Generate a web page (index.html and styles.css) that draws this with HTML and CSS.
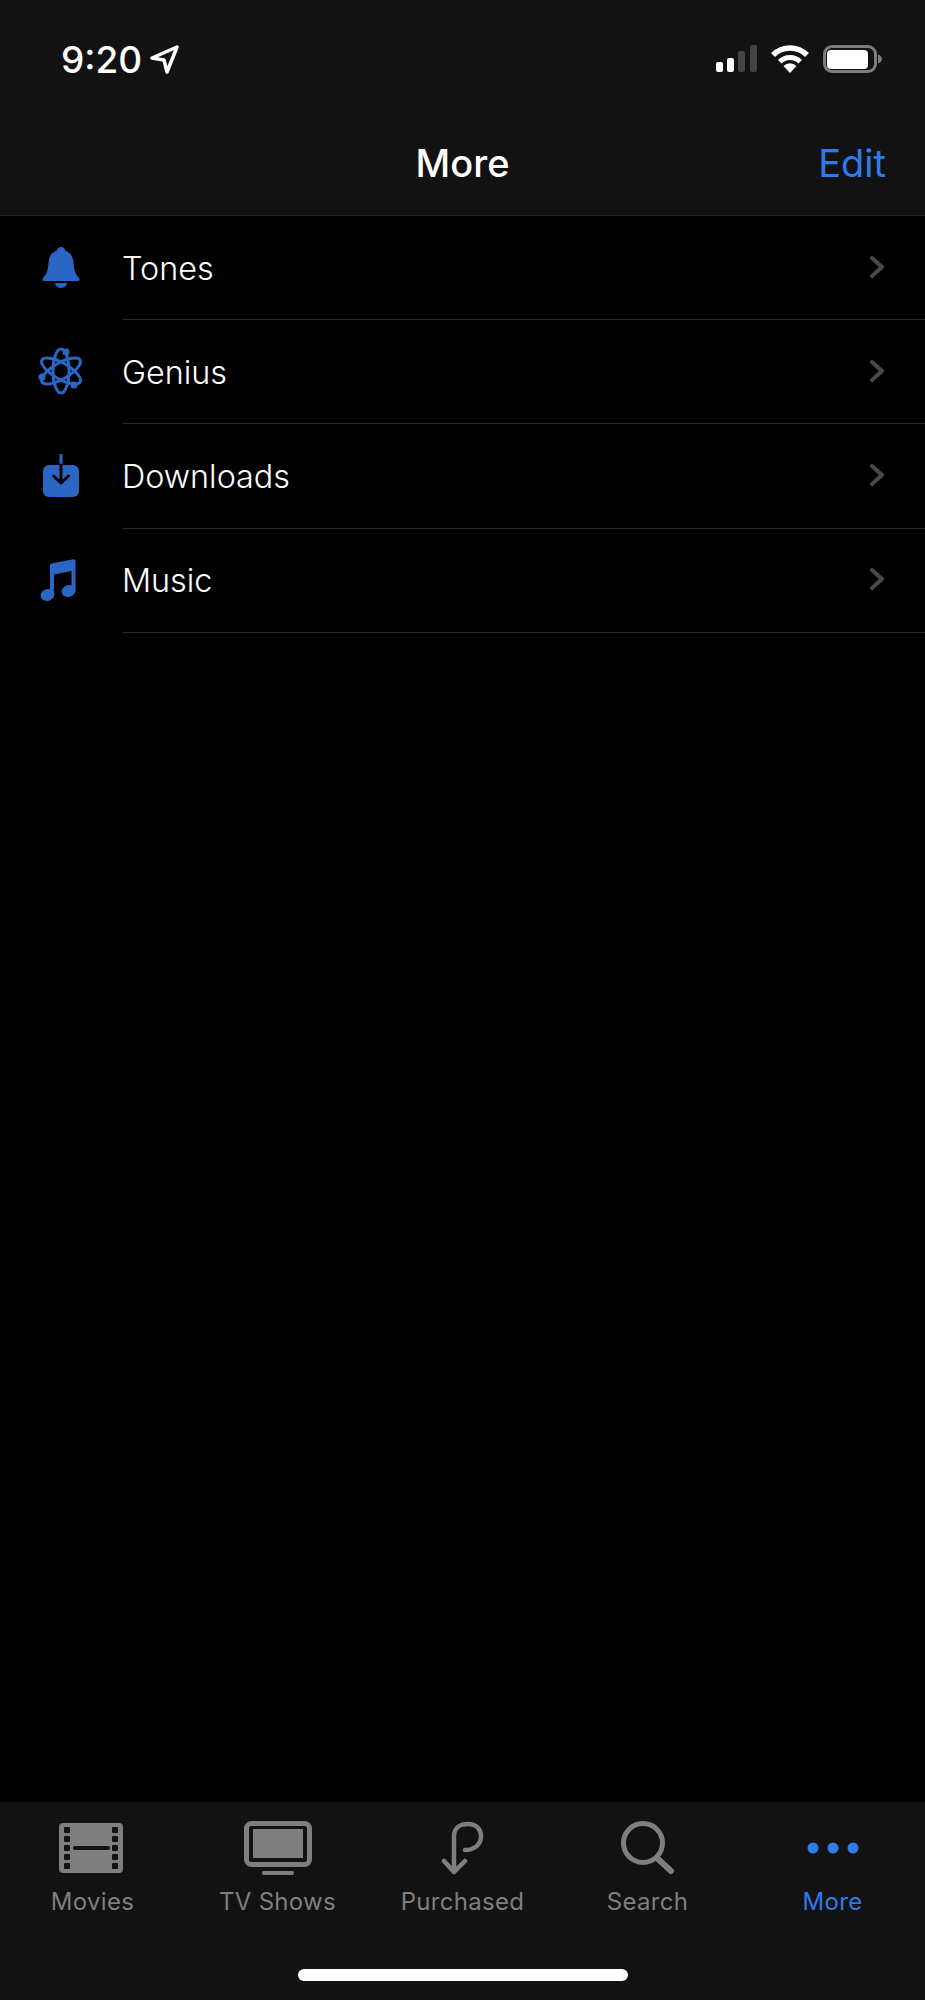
FILE: index.html
```html
<!DOCTYPE html>
<html lang="en">

<head>
    <title>More</title>
    <link rel="stylesheet" href="styles.css">
</head>

<body>

    <div id="container">

        <div class="top-bar">
            <div class="status-bar">
                <div class="status-left">
                    <span class="time">9:20</span>
                    <svg width="29" height="29" viewBox="0 0 29 29"><path d="M27 2 L2 13 L14 15 L17 27 Z" fill="none" stroke="#fff" stroke-width="3.5" stroke-linejoin="round"/></svg>
                </div>
                <div class="status-right">
                    <svg width="41" height="28" viewBox="0 0 41 28">
                        <rect x="0" y="17" width="7" height="10" rx="2" fill="#fff"/>
                        <rect x="11" y="13" width="7" height="14" rx="2" fill="#fff"/>
                        <rect x="22" y="6" width="7" height="21" rx="2" fill="#444"/>
                        <rect x="34" y="0" width="7" height="27" rx="2" fill="#444"/>
                    </svg>
                    <svg width="38" height="28" viewBox="0 0 38 28">
                        <path d="M2 10 A24 24 0 0 1 36 10" fill="none" stroke="#fff" stroke-width="5.5"/>
                        <path d="M8.75 16.75 A14.5 14.5 0 0 1 29.25 16.75" fill="none" stroke="#fff" stroke-width="5"/>
                        <path d="M19 28 L12.5 21 A9 9 0 0 1 25.5 21 Z" fill="#fff"/>
                    </svg>
                    <svg width="59" height="28" viewBox="0 0 59 28">
                        <rect x="1.5" y="1.5" width="51" height="25" rx="7.5" fill="none" stroke="#7c7c7c" stroke-width="3"/>
                        <rect x="4" y="5" width="41" height="19" rx="4" fill="#fff"/>
                        <path d="M55 9.5 C57.5 10.5 59 12 59 14 C59 16 57.5 17.5 55 18.5 Z" fill="#7c7c7c"/>
                    </svg>
                </div>
            </div>
            <div class="nav-bar">
                <span></span>
                <h2 class="nav-title">More</h2>
                <a class="nav-edit">Edit</a>
            </div>
        </div>

        <div class="list">
            <div class="row">
                <div class="row-icon">
                    <svg width="38" height="41" viewBox="0 0 38 41">
                        <path d="M19 0 C16.5 0 15 1.8 15 3.6 C9 5.5 7 10 6.5 16 C6 24 4 28 1 31 C0 32 0 34 2 34 L36 34 C38 34 38 32 37 31 C34 28 32 24 31.5 16 C31 10 29 5.5 23 3.6 C23 1.8 21.5 0 19 0 Z" fill="#2a66c4"/>
                        <path d="M13 36 L25 36 A6 5 0 0 1 13 36 Z" fill="#2a66c4"/>
                    </svg>
                </div>
                <div class="row-body">
                    <span class="row-label">Tones</span>
                    <svg class="chevron" width="16" height="24" viewBox="0 0 16 24"><path d="M3 3 L13 12 L3 21" fill="none" stroke="#4a4a4a" stroke-width="4" stroke-linecap="round" stroke-linejoin="round"/></svg>
                </div>
            </div>
            <div class="row">
                <div class="row-icon">
                    <svg width="46" height="48" viewBox="0 0 46 48">
                        <g fill="none" stroke="#2a66c4" stroke-width="3">
                            <ellipse cx="23" cy="24" rx="8" ry="22"/>
                            <ellipse cx="23" cy="24" rx="8" ry="22" transform="rotate(60 23 24)"/>
                            <ellipse cx="23" cy="24" rx="8" ry="22" transform="rotate(120 23 24)"/>
                        </g>
                        <circle cx="28" cy="5" r="3.5" fill="#2a66c4"/>
                        <circle cx="4" cy="30" r="3.5" fill="#2a66c4"/>
                        <circle cx="36" cy="38" r="3.5" fill="#2a66c4"/>
                    </svg>
                </div>
                <div class="row-body">
                    <span class="row-label">Genius</span>
                    <svg class="chevron" width="16" height="24" viewBox="0 0 16 24"><path d="M3 3 L13 12 L3 21" fill="none" stroke="#4a4a4a" stroke-width="4" stroke-linecap="round" stroke-linejoin="round"/></svg>
                </div>
            </div>
            <div class="row">
                <div class="row-icon">
                    <svg width="36" height="43" viewBox="0 0 36 43">
                        <rect x="0" y="11" width="36" height="32" rx="6" fill="#2a66c4"/>
                        <path d="M18 0 V11" stroke="#2a66c4" stroke-width="3" fill="none"/>
                        <path d="M18 11 V29 M10.5 22 L18 29 L25.5 22" stroke="#000" stroke-width="3" fill="none" stroke-linecap="round" stroke-linejoin="round"/>
                    </svg>
                </div>
                <div class="row-body">
                    <span class="row-label">Downloads</span>
                    <svg class="chevron" width="16" height="24" viewBox="0 0 16 24"><path d="M3 3 L13 12 L3 21" fill="none" stroke="#4a4a4a" stroke-width="4" stroke-linecap="round" stroke-linejoin="round"/></svg>
                </div>
            </div>
            <div class="row">
                <div class="row-icon">
                    <svg width="42" height="42" viewBox="0 0 42 42">
                        <path d="M10 6.5 Q10 5 11.5 4.6 L33.5 0.2 Q35.5 0 35.5 2 V33 H31.5 V12 L14 15.5 V37 H10 Z" fill="#2a66c4"/>
                        <ellipse cx="7.5" cy="36" rx="7" ry="5.8" transform="rotate(-20 7.5 36)" fill="#2a66c4"/>
                        <ellipse cx="28.5" cy="32" rx="7" ry="5.8" transform="rotate(-20 28.5 32)" fill="#2a66c4"/>
                    </svg>
                </div>
                <div class="row-body">
                    <span class="row-label">Music</span>
                    <svg class="chevron" width="16" height="24" viewBox="0 0 16 24"><path d="M3 3 L13 12 L3 21" fill="none" stroke="#4a4a4a" stroke-width="4" stroke-linecap="round" stroke-linejoin="round"/></svg>
                </div>
            </div>
        </div>

        <div class="tab-bar">
            <div class="tabs">
                <div class="tab">
                    <div class="tab-icon icon-movies">
                        <svg width="64" height="50" viewBox="0 0 64 50">
                            <rect width="64" height="50" rx="4" fill="#7f7f7f"/>
                            <g fill="#121212">
                                <rect x="5" y="4" width="6" height="6" rx="1"/>
                                <rect x="5" y="13" width="6" height="6" rx="1"/>
                                <rect x="5" y="22" width="6" height="6" rx="1"/>
                                <rect x="5" y="31" width="6" height="6" rx="1"/>
                                <rect x="5" y="40" width="6" height="6" rx="1"/>
                                <rect x="53" y="4" width="6" height="6" rx="1"/>
                                <rect x="53" y="13" width="6" height="6" rx="1"/>
                                <rect x="53" y="22" width="6" height="6" rx="1"/>
                                <rect x="53" y="31" width="6" height="6" rx="1"/>
                                <rect x="53" y="40" width="6" height="6" rx="1"/>
                                <rect x="14" y="23" width="37" height="4" rx="2"/>
                            </g>
                        </svg>
                    </div>
                    <span class="tab-label">Movies</span>
                </div>
                <div class="tab">
                    <div class="tab-icon">
                        <svg width="68" height="54" viewBox="0 0 68 54">
                            <rect x="2.5" y="2.5" width="63" height="41" rx="5" fill="none" stroke="#7f7f7f" stroke-width="5"/>
                            <rect x="9" y="8" width="50" height="29" fill="#7f7f7f"/>
                            <rect x="18" y="50" width="32" height="4" rx="2" fill="#7f7f7f"/>
                        </svg>
                    </div>
                    <span class="tab-label">TV Shows</span>
                </div>
                <div class="tab">
                    <div class="tab-icon">
                        <svg width="44" height="56" viewBox="0 0 44 56">
                            <path d="M13 52 V16 C13 8 19 4 27 4 C35 4 40 9 40 16 C40 25 33 30 24 30 M3 41 L13 52 L24 41" fill="none" stroke="#7f7f7f" stroke-width="4.5" stroke-linecap="round" stroke-linejoin="round"/>
                        </svg>
                    </div>
                    <span class="tab-label">Purchased</span>
                </div>
                <div class="tab">
                    <div class="tab-icon">
                        <svg width="54" height="54" viewBox="0 0 54 54">
                            <circle cx="22" cy="22" r="19.5" fill="none" stroke="#7f7f7f" stroke-width="5"/>
                            <path d="M36 37 L50 50" stroke="#7f7f7f" stroke-width="6" stroke-linecap="round"/>
                        </svg>
                    </div>
                    <span class="tab-label">Search</span>
                </div>
                <div class="tab tab-active">
                    <div class="tab-icon">
                        <svg width="52" height="12" viewBox="0 0 52 12">
                            <circle cx="6" cy="6" r="5.5" fill="#2f7bea"/>
                            <circle cx="26" cy="6" r="5.5" fill="#2f7bea"/>
                            <circle cx="46" cy="6" r="5.5" fill="#2f7bea"/>
                        </svg>
                    </div>
                    <span class="tab-label">More</span>
                </div>
            </div>
            <div class="home-indicator"></div>
        </div>

    </div>

</body>
</html>
```

FILE: styles.css
```css
body {
    font-family: Inter, "Liberation Sans", sans-serif;
    background-color: #000;
    margin: 0;
    padding: 0;
    color: #fff;
}

#container {
    width: 925px;
    height: 2000px;
    display: flex;
    flex-direction: column;
}

.top-bar {
    background-color: #121212;
    border-bottom: 1px solid #222;
}

.status-bar {
    box-sizing: border-box;
    height: 110px;
    padding: 8px 43px 0 61px;
    display: flex;
    justify-content: space-between;
    align-items: center;
}

.status-left {
    display: flex;
    align-items: center;
    gap: 8px;
}

.time {
    font-size: 37px;
    font-weight: 500;
}

.status-right {
    display: flex;
    align-items: center;
    gap: 14px;
}

.nav-bar {
    box-sizing: border-box;
    height: 105px;
    padding: 0 39px;
    display: grid;
    grid-template-columns: 1fr auto 1fr;
    align-items: center;
}

.nav-title {
    margin: 0;
    font-size: 38px;
    font-weight: 500;
}

.nav-edit {
    justify-self: end;
    font-size: 38px;
    color: #2f7bea;
}

.list {
    flex: 1;
}

.row {
    height: 104.2px;
    display: flex;
}

.row-icon {
    flex: none;
    width: 122px;
    margin-right: 1px;
    padding-bottom: 2px;
    box-sizing: border-box;
    display: flex;
    justify-content: center;
    align-items: center;
}

.row-body {
    flex: 1;
    box-sizing: border-box;
    padding: 1px 40px 0 0;
    border-bottom: 1px solid #2b2b2b;
    display: flex;
    justify-content: space-between;
    align-items: center;
}

.row-label {
    margin-left: -1px;
    font-size: 32.3px;
    font-weight: 300;
}

.chevron {
    margin-bottom: 3px;
}

.tab-bar {
    box-sizing: border-box;
    height: 198px;
    background-color: #121212;
    padding-top: 18px;
    display: flex;
    flex-direction: column;
}

.tabs {
    display: flex;
}

.tab {
    flex: 1;
    display: flex;
    flex-direction: column;
    align-items: center;
    color: #7f7f7f;
}

.tab-icon {
    height: 56px;
    display: flex;
    align-items: center;
    justify-content: center;
}

.icon-movies {
    margin-right: 3px;
}

.tab-label {
    margin-top: 11px;
    line-height: 30px;
    font-size: 24px;
    letter-spacing: 0.3px;
}

.tab-active {
    color: #2f7bea;
}

.home-indicator {
    width: 330px;
    height: 12px;
    margin: 52px auto 0;
    border-radius: 6px;
    background-color: #fff;
}
```
